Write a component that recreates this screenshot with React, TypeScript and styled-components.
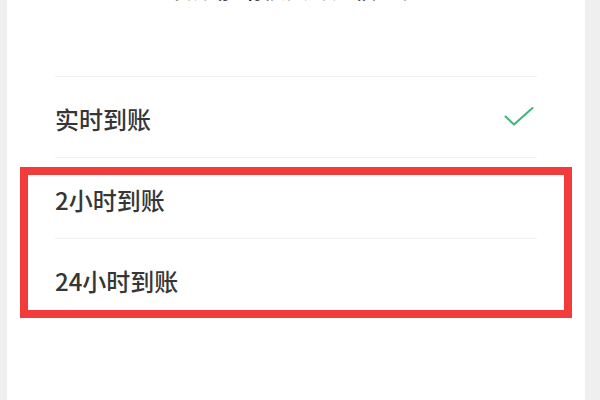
import React from 'react';
import styled, { createGlobalStyle } from 'styled-components';

const GlobalStyle = createGlobalStyle`
    html, body {
        margin: 0;
        padding: 0;
        background: #efefef;
        font-family: "Noto Sans CJK SC", "Noto Sans", sans-serif;
    }
`;

const Page = styled.div`
    position: relative;
    width: 600px;
    height: 400px;
    overflow: hidden;
    background: #efefef;
`;

const Panel = styled.div`
    margin-left: 7px;
    width: 578px;
    height: 400px;
    background: #ffffff;
    display: flex;
    flex-direction: column;
`;

const Heading = styled.div`
    margin-top: -27px;
    height: 30px;
    line-height: 30px;
    text-align: center;
    font-size: 23px;
    font-weight: 500;
    color: #1f1f1f;
    padding-left: 2px;
`;

const List = styled.div`
    margin-top: 73px;
    padding: 0 48px;
    display: flex;
    flex-direction: column;
`;

const Divider = styled.div`
    height: 1px;
    background: #f1f1f1;
`;

const Row = styled.div`
    height: 80px;
    display: flex;
    align-items: center;
    justify-content: space-between;
    padding-top: 2px;
    box-sizing: border-box;
`;

const Label = styled.span`
    font-size: 24px;
    font-weight: 500;
    color: #363636;
`;

const Highlight = styled.div`
    position: absolute;
    left: 20px;
    top: 167px;
    width: 552px;
    height: 151px;
    box-sizing: border-box;
    border: 8px solid #f23b3b;
    pointer-events: none;
`;

const Check = () => (
    <svg width="30" height="22" viewBox="0 0 30 22" style={{ marginRight: 3, marginTop: -4 }}>
        <path d="M1.5 11.5 L10 19.5 L28.5 3" fill="none" stroke="#3fb47c" strokeWidth="2" strokeLinecap="round" strokeLinejoin="round" />
    </svg>
);

const options = [
    { label: '实时到账', selected: true },
    { label: '2小时到账', selected: false },
    { label: '24小时到账', selected: false },
];

export default function App() {
    return (
        <>
            <GlobalStyle />
            <Page>
                <Panel>
                    <Heading>转账前请核实对方信息。</Heading>
                    <List>
                        <Divider />
                        {options.map((o, i) => (
                            <React.Fragment key={o.label}>
                                <Row>
                                    <Label>{o.label}</Label>
                                    {o.selected && <Check />}
                                </Row>
                                {i < options.length - 1 && <Divider />}
                            </React.Fragment>
                        ))}
                    </List>
                </Panel>
                <Highlight />
            </Page>
        </>
    );
}
